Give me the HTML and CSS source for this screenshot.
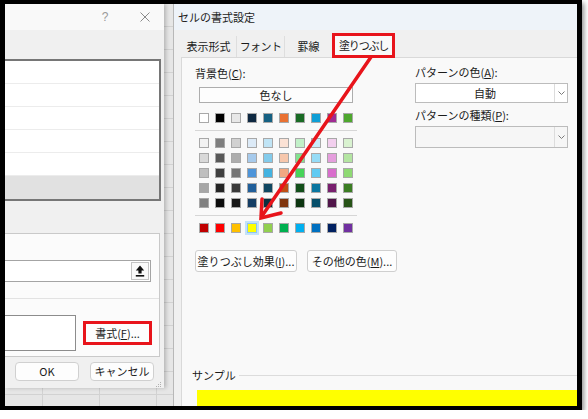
FILE: index.html
```html
<!DOCTYPE html>
<html lang="ja">
<head>
<meta charset="utf-8">
<link rel="stylesheet" href="styles.css">
</head>
<body>
<div class="screen">
  <div class="left">
    <div class="dlg-a">
      <div class="a-title"><span class="q">?</span><span class="x"><svg width="10" height="10" viewBox="0 0 10 10"><path d="M0.5 0.5 L9.5 9.5 M9.5 0.5 L0.5 9.5" stroke="#8a8a8a" stroke-width="1" fill="none"/></svg></span></div>
      <div class="a-strip"></div>
      <div class="list">
        <div class="row"></div>
        <div class="row"></div>
        <div class="row"></div>
        <div class="row"></div>
        <div class="row"></div>
        <div class="row sel"></div>
      </div>
      <div class="panel">
        <div class="inp"><span class="inp-btn"><svg width="10" height="12" viewBox="0 0 10 12"><path d="M5 0.5 L0.8 5.5 L3.4 5.5 L3.4 8.6 L6.6 8.6 L6.6 5.5 L9.2 5.5 Z" fill="#111"/><rect x="0.8" y="10" width="8.4" height="1.6" fill="#111"/></svg></span></div>
        <div class="psep"></div>
        <div class="prow">
          <div class="preview"></div>
          <div class="redbox"><span class="fbtn">書式(<u>F</u>)...</span></div>
        </div>
      </div>
      <div class="abtns">
        <span class="btn">OK</span>
        <span class="btn">キャンセル</span>
      </div>
      <div class="grip"><svg width="6" height="6" viewBox="0 0 6 6"><g fill="#b0b0b0"><rect x="4" y="0" width="1" height="1"/><rect x="2" y="2" width="1" height="1"/><rect x="4" y="2" width="1" height="1"/><rect x="0" y="4" width="1" height="1"/><rect x="2" y="4" width="1" height="1"/><rect x="4" y="4" width="1" height="1"/></g></svg></div>
    </div>
  </div>
  <div class="fmt">
    <div class="f-title">セルの書式設定</div>
    <div class="tabs">
      <span class="tab t1">表示形式</span>
      <span class="tab t2">フォント</span>
      <span class="tab t3">罫線</span>
      <span class="tab active">塗りつぶし</span>
    </div>
    <div class="fpanel">
      <div class="top">
        <div class="lcol">
          <div class="lbl">背景色(<u>C</u>):</div>
          <div class="nocolor">色なし</div>
          <div class="srow theme">
            <span class="sw" style="background:#ffffff"></span>
            <span class="sw" style="background:#000000"></span>
            <span class="sw" style="background:#e8e8e8"></span>
            <span class="sw" style="background:#0e2841"></span>
            <span class="sw" style="background:#156082"></span>
            <span class="sw" style="background:#e97132"></span>
            <span class="sw" style="background:#196b24"></span>
            <span class="sw" style="background:#0f9ed5"></span>
            <span class="sw" style="background:#a02b93"></span>
            <span class="sw" style="background:#4ea72e"></span>
          </div>
          <div class="sep"></div>
          <div class="tints">
            <div class="srow">
              <span class="sw" style="background:#f2f2f2"></span>
              <span class="sw" style="background:#7f7f7f"></span>
              <span class="sw" style="background:#d1d1d1"></span>
              <span class="sw" style="background:#dceaf7"></span>
              <span class="sw" style="background:#c0e4f5"></span>
              <span class="sw" style="background:#fbe2d5"></span>
              <span class="sw" style="background:#c1f0c8"></span>
              <span class="sw" style="background:#caedfb"></span>
              <span class="sw" style="background:#f2cfee"></span>
              <span class="sw" style="background:#d9f2d0"></span>
            </div>
            <div class="srow">
              <span class="sw" style="background:#d9d9d9"></span>
              <span class="sw" style="background:#595959"></span>
              <span class="sw" style="background:#adadad"></span>
              <span class="sw" style="background:#a6caec"></span>
              <span class="sw" style="background:#83cbeb"></span>
              <span class="sw" style="background:#f7c7ac"></span>
              <span class="sw" style="background:#83e28e"></span>
              <span class="sw" style="background:#95dcf7"></span>
              <span class="sw" style="background:#e59edd"></span>
              <span class="sw" style="background:#b4e5a2"></span>
            </div>
            <div class="srow">
              <span class="sw" style="background:#bfbfbf"></span>
              <span class="sw" style="background:#404040"></span>
              <span class="sw" style="background:#757575"></span>
              <span class="sw" style="background:#4e95d9"></span>
              <span class="sw" style="background:#44b3e1"></span>
              <span class="sw" style="background:#f1a983"></span>
              <span class="sw" style="background:#47d459"></span>
              <span class="sw" style="background:#61cbf3"></span>
              <span class="sw" style="background:#d86ecc"></span>
              <span class="sw" style="background:#8ed973"></span>
            </div>
            <div class="srow">
              <span class="sw" style="background:#a6a6a6"></span>
              <span class="sw" style="background:#262626"></span>
              <span class="sw" style="background:#3a3a3a"></span>
              <span class="sw" style="background:#215f9a"></span>
              <span class="sw" style="background:#104862"></span>
              <span class="sw" style="background:#c04f15"></span>
              <span class="sw" style="background:#124f1a"></span>
              <span class="sw" style="background:#0b76a0"></span>
              <span class="sw" style="background:#78206e"></span>
              <span class="sw" style="background:#3b7d23"></span>
            </div>
            <div class="srow">
              <span class="sw" style="background:#808080"></span>
              <span class="sw" style="background:#0d0d0d"></span>
              <span class="sw" style="background:#171717"></span>
              <span class="sw" style="background:#153d64"></span>
              <span class="sw" style="background:#0a3041"></span>
              <span class="sw" style="background:#80350e"></span>
              <span class="sw" style="background:#0c3511"></span>
              <span class="sw" style="background:#074f6a"></span>
              <span class="sw" style="background:#501549"></span>
              <span class="sw" style="background:#275317"></span>
            </div>
          </div>
          <div class="sep"></div>
          <div class="srow std">
            <span class="sw" style="background:#c00000"></span>
            <span class="sw" style="background:#ff0000"></span>
            <span class="sw" style="background:#ffc000"></span>
            <span class="sw chosen" style="background:#ffff00"></span>
            <span class="sw" style="background:#92d050"></span>
            <span class="sw" style="background:#00b050"></span>
            <span class="sw" style="background:#00b0f0"></span>
            <span class="sw" style="background:#0070c0"></span>
            <span class="sw" style="background:#002060"></span>
            <span class="sw" style="background:#7030a0"></span>
          </div>
        </div>
        <div class="rcol">
          <div class="lbl">パターンの色(<u>A</u>):</div>
          <div class="select"><span class="sel-text">自動</span><span class="sel-arr"><svg width="7" height="4" viewBox="0 0 7 4"><path d="M0.5 0.5 L3.5 3.5 L6.5 0.5" stroke="#7a7a7a" stroke-width="1" fill="none"/></svg></span></div>
          <div class="lbl lbl2">パターンの種類(<u>P</u>):</div>
          <div class="select dis"><span class="sel-text"></span><span class="sel-arr"><svg width="7" height="4" viewBox="0 0 7 4"><path d="M0.5 0.5 L3.5 3.5 L6.5 0.5" stroke="#7a7a7a" stroke-width="1" fill="none"/></svg></span></div>
        </div>
      </div>
      <div class="fbtns">
        <span class="fb fb1">塗りつぶし効果(<u>I</u>)...</span>
        <span class="fb fb2">その他の色(<u>M</u>)...</span>
      </div>
      <div class="spacer"></div>
      <div class="sample-head"><span class="slabel">サンプル</span><span class="sline"></span></div>
      <div class="yellow"></div>
    </div>
  </div>
</div>
<svg class="arrow" width="588" height="419" viewBox="0 0 588 419">
  <g stroke="#e8141b" stroke-width="3.5" stroke-linecap="round" fill="none">
    <path d="M371 57 L262 216"/>
    <path d="M262 199 L261 218 L281 213"/>
  </g>
</svg>
</body>
</html>
```

FILE: styles.css
```css
* { box-sizing: border-box; }
body {
  margin: 0;
  background: #ffffff;
  font-family: "Noto Sans CJK JP", "Noto Sans", sans-serif;
  font-size: 11px;
  color: #1b1b1b;
}
u { text-decoration: underline; text-underline-offset: 1px; }

.screen {
  width: 582px;
  height: 410px;
  border-style: solid;
  border-color: #000;
  border-width: 4px 5px;
  display: flex;
  overflow: hidden;
  box-shadow: 2px 3px 5px rgba(0,0,0,0.45);
}

/* left area: excel sheet with a dialog on top */
.left {
  width: 168px;
  flex: none;
  background-color: #e6e6e6;
  background-image:
    repeating-linear-gradient(to bottom, transparent 0 22px, #d2d2d2 22px 23px),
    repeating-linear-gradient(to right, transparent 0 37px, #d2d2d2 37px 38px, transparent 38px 57px);
}
.dlg-a {
  width: 159px;
  height: 384px;
  background: #f0f0f0;
  display: flex;
  flex-direction: column;
  box-shadow: 2px 0 4px rgba(0,0,0,0.22);
}
.a-title {
  height: 26px;
  flex: none;
  background: #f9f9f9;
  display: flex;
  align-items: center;
  color: #8a8a8a;
}
.q { width: 20px; margin-left: 90px; text-align: center; font-size: 12px; font-family: "Liberation Sans", sans-serif; color: #9a9a9a; }
.x { width: 20px; margin-left: 20px; display: flex; justify-content: center; }
.a-strip { height: 29px; flex: none; }
.list {
  width: 156px;
  height: 142px;
  flex: none;
  background: #fff;
  border: 2px solid #767676;
  border-left: 0;
  display: flex;
  flex-direction: column;
}
.row { height: 23px; flex: none; border-bottom: 1px solid #ececec; }
.row.sel { flex: 1; background: #e1e1e1; border-bottom: 0; }
.panel {
  margin-top: 32px;
  width: 155px;
  height: 124px;
  flex: none;
  background: #fbfbfb;
  border: 1px solid #c9c9c9;
  border-left: 0;
  display: flex;
  flex-direction: column;
}
.inp {
  margin-top: 26px;
  width: 146px;
  height: 22px;
  background: #fff;
  border: 1px solid #a4a4a4;
  border-left: 0;
  display: flex;
  justify-content: flex-end;
  align-items: center;
  padding-right: 1px;
}
.inp-btn {
  width: 18px;
  height: 18px;
  border: 1px solid #c4c4c4;
  background: #fafafa;
  display: flex;
  align-items: center;
  justify-content: center;
}
.psep { margin-top: 16px; height: 1px; background: #e2e2e2; }
.prow { margin-top: 16px; display: flex; align-items: center; }
.preview {
  width: 71px;
  height: 36px;
  background: #fff;
  border: 1px solid #8c8c8c;
  border-left: 0;
}
.redbox {
  margin-left: 7px;
  width: 69px;
  height: 24px;
  border: 3px solid #e8141b;
  display: flex;
}
.fbtn {
  flex: 1;
  background: #fdfdfd;
  display: flex;
  align-items: center;
  justify-content: center;
  line-height: 1;
}
.abtns { margin-top: 5px; padding-left: 10px; display: flex; gap: 11px; }
.btn {
  width: 64px;
  height: 19px;
  background: #fdfdfd;
  border: 1px solid #d0d0d0;
  border-radius: 4px;
  display: flex;
  align-items: center;
  justify-content: center;
  line-height: 1;
}
.grip { margin-top: 1px; align-self: flex-end; margin-right: 2px; display: flex; }

/* right dialog */
.fmt {
  width: 404px;
  flex: none;
  border-left: 1px solid #b8b8b8;
  background: #f0f0f0;
  display: flex;
  flex-direction: column;
}
.f-title {
  height: 26px;
  flex: none;
  background: #eef3f9;
  padding-left: 4px;
  display: flex;
  align-items: center;
  color: #222;
}
.tabs {
  height: 27px;
  flex: none;
  padding-left: 7px;
  display: flex;
  align-items: flex-end;
}
.tab {
  height: 21px;
  display: flex;
  align-items: center;
  justify-content: center;
  border-right: 1px solid #dedede;
  line-height: 1;
  font-size: 11px;
  white-space: nowrap;
}
.t1 { width: 56px; }
.t2 { width: 48px; letter-spacing: -0.6px; }
.t3 { width: 47px; border-right: 0; }
.tab.active {
  width: 63px;
  height: 25px;
  border: 3px solid #e8141b;
  background: #f9f9f9;
  margin-bottom: -1px;
  position: relative;
  z-index: 1;
  letter-spacing: -1.2px;
}
.fpanel {
  flex: 1;
  margin-left: 7px;
  background: #f9f9f9;
  border-left: 1px solid #d9d9d9;
  border-top: 1px solid #d9d9d9;
  display: flex;
  flex-direction: column;
}
.top { display: flex; }
.lcol { width: 176px; padding-left: 13px; padding-top: 8px; }
.lbl { height: 14px; line-height: 14px; white-space: nowrap; }
.nocolor {
  margin: 7px 0 0 4px;
  width: 154px;
  height: 16px;
  background: #fdfdfd;
  border: 1px solid #adadad;
  text-align: center;
  line-height: 14px;
}
.srow { display: flex; gap: 6px; margin-left: 4px; }
.theme { margin-top: 10px; }
.sw { width: 10px; height: 10px; border: 1px solid #a8a8a8; flex: none; }
.sw.chosen { border-color: #8cc4ef; box-shadow: 0 0 0 2px #c3e2f8; }
.sep { margin-top: 7px; height: 1px; width: 162px; background: #d6d6d6; }
.tints { margin-top: 7px; display: flex; flex-direction: column; gap: 5px; }
.std { margin-top: 7px; }
.rcol { margin-left: 57px; width: 153px; padding-top: 7px; }
.lbl2 { margin-top: 5px; }
.select {
  margin-top: 4px;
  height: 20px;
  background: #fff;
  border: 1px solid #bcbcbc;
  display: flex;
}
.select.dis { height: 22px; background: #f6f6f6; }
.sel-text { flex: 1; display: flex; align-items: center; justify-content: center; line-height: 1; }
.sel-arr {
  width: 13px;
  border-left: 1px solid #dcdcdc;
  display: flex;
  align-items: center;
  justify-content: center;
}
.fbtns { margin: 17px 0 0 13px; display: flex; gap: 10px; }
.fb {
  height: 22px;
  background: #fdfdfd;
  border: 1px solid #cfcfcf;
  border-radius: 3px;
  display: flex;
  align-items: center;
  justify-content: center;
  line-height: 1;
  white-space: nowrap;
}
.fb1 { width: 102px; }
.fb2 { width: 90px; }
.spacer { flex: 1; }
.sample-head { margin-left: 10px; height: 14px; display: flex; align-items: center; }
.slabel { line-height: 14px; }
.sline { flex: 1; height: 1px; background: #dcdcdc; margin-left: 3px; }
.yellow { margin: 8px 0 0 15px; height: 16px; background: #ffff00; }

.arrow { position: absolute; left: 0; top: 0; pointer-events: none; }
```
